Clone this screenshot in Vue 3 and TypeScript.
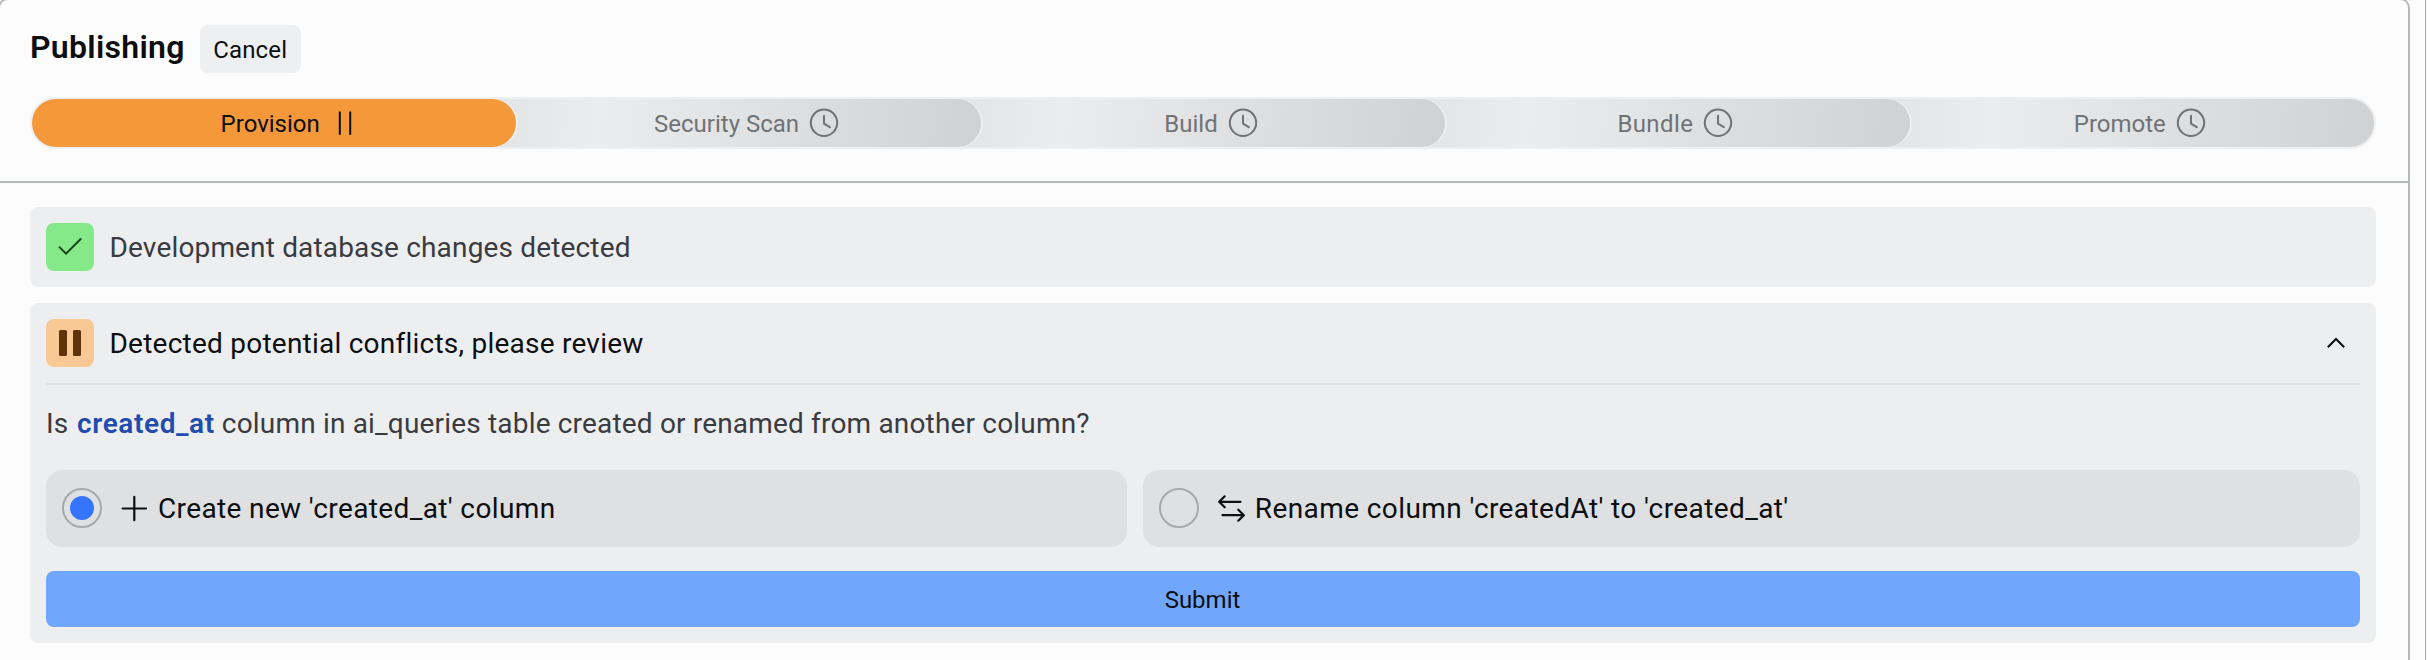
<script setup lang="ts">
import { ref } from 'vue'

interface Stage {
  id: string
  label: string
  state: 'paused' | 'pending'
}

const stages: Stage[] = [
  { id: 'provision', label: 'Provision', state: 'paused' },
  { id: 'scan', label: 'Security Scan', state: 'pending' },
  { id: 'build', label: 'Build', state: 'pending' },
  { id: 'bundle', label: 'Bundle', state: 'pending' },
  { id: 'promote', label: 'Promote', state: 'pending' },
]

const choice = ref<'create' | 'rename'>('create')
const expanded = ref(true)
</script>

<template>
  <div class="page">
    <main class="panel">
      <header class="header">
        <div class="heading">
          <h1>Publishing</h1>
          <button class="cancel" type="button">Cancel</button>
        </div>
        <ol class="stages">
          <li v-for="stage in stages" :key="stage.id" class="stage" :class="[stage.state, stage.id]">
            <span>{{ stage.label }}</span>
            <svg v-if="stage.state === 'paused'" width="32" height="32" viewBox="0 0 32 32">
              <path d="M10.8 5.3v21.6M21.2 5.3v21.6" />
            </svg>
            <svg v-else width="32" height="32" viewBox="0 0 32 32">
              <circle cx="16" cy="15.8" r="13.2" />
              <path d="M16 8.8v7.8l5.8 3.6" />
            </svg>
          </li>
        </ol>
      </header>

      <section class="steps">
        <article class="card">
          <div class="row done">
            <svg class="badge ok" width="48" height="48" viewBox="0 0 48 48">
              <path d="M13 23.6l7 7L35.2 15.5" />
            </svg>
            <span class="done-text">Development database changes detected</span>
          </div>
        </article>

        <article class="card">
          <div class="row head" @click="expanded = !expanded">
            <svg class="badge wait" width="48" height="48" viewBox="0 0 48 48">
              <rect x="13" y="11" width="8" height="26" rx="1.5" />
              <rect x="27" y="11" width="8" height="26" rx="1.5" />
            </svg>
            <span class="head-text">Detected potential conflicts, please review</span>
            <svg class="chevron" width="48" height="48" viewBox="0 0 48 48">
              <path d="M15.8 28.2L24 20l8.2 8.2" />
            </svg>
          </div>
          <form v-if="expanded" class="body" @submit.prevent>
            <p class="question">
              Is <strong>created_at</strong> column in ai_queries table created or renamed from another column?
            </p>
            <div class="options">
              <label class="option create">
                <input v-model="choice" type="radio" name="resolution" value="create" />
                <svg width="28" height="28" viewBox="0 0 28 28">
                  <path d="M14.3 1.8v23.4M2.6 13.5h23.4" />
                </svg>
                <span>Create new 'created_at' column</span>
              </label>
              <label class="option rename">
                <input v-model="choice" type="radio" name="resolution" value="rename" />
                <svg width="28" height="28" viewBox="0 0 28 28">
                  <path d="M23.5 6.8H2.2M7.7 1.3L2.2 6.8l5.5 5.5M5.5 20.2h21.3M21.3 14.7l5.5 5.5-5.5 5.5" />
                </svg>
                <span>Rename column 'createdAt' to 'created_at'</span>
              </label>
            </div>
            <button class="submit" type="submit">Submit</button>
          </form>
        </article>
      </section>
    </main>
  </div>
</template>

<style>
body {
  background: #fcfcfc;
}
</style>

<style scoped>
.page {
  box-sizing: border-box;
  width: 2426px;
  height: 660px;
  overflow: hidden;
  border-right: 1px solid #a9acac;
  background: #fcfcfc;
  font-family: Roboto, "Liberation Sans", sans-serif;
  color: #0d0e10;
}

.panel {
  box-sizing: border-box;
  width: 2412px;
  height: 700px;
  margin: -2px 0 0 -2px;
  border: 2px solid #b6b9b9;
  border-radius: 10px;
}

.header {
  box-sizing: border-box;
  height: 183px;
  padding: 23px 32px 0 30px;
  border-bottom: 2px solid #b6b9b9;
}

.heading {
  display: flex;
  align-items: baseline;
  gap: 15px;
  height: 48px;
}

h1 {
  margin: 0;
  font-size: 32px;
  line-height: 48px;
  font-weight: 600;
  letter-spacing: 0.3px;
}

button {
  border: 0;
  font: inherit;
  color: inherit;
}

.cancel {
  box-sizing: border-box;
  width: 101px;
  height: 48px;
  padding: 2px 0 0;
  border-radius: 8px;
  background: #eeeff1;
  font-size: 24px;
  line-height: 46px;
  letter-spacing: 0.15px;
}

.stages {
  display: flex;
  box-sizing: border-box;
  width: 2346px;
  height: 52px;
  margin: 26px 0 0;
  padding: 0;
  border: 2px solid #edeff1;
  border-radius: 26px;
  background: #edeff1;
  list-style: none;
}

.stage {
  display: flex;
  flex: none;
  box-sizing: border-box;
  align-items: center;
  justify-content: center;
  gap: 9px;
  width: 484.4px;
  padding-left: 17px;
  border-radius: 0 24px 24px 0;
  box-shadow: 2px 0 0 #edeff1;
  background: linear-gradient(95deg, #e3e4e5 0%, #ebeced 21%, #d0d1d2 100%);
  color: #707376;
  font-size: 24px;
}

.stage + .stage {
  margin-left: -20px;
}

/* Earlier stages overlap the ones after them. */
.stage:nth-child(1) { z-index: 5; }
.stage:nth-child(2) { z-index: 4; }
.stage:nth-child(3) { z-index: 3; }
.stage:nth-child(4) { z-index: 2; }
.stage:nth-child(5) { z-index: 1; }

.stage:last-child {
  box-shadow: none;
}

.stage.paused {
  padding-left: 33px;
  border-radius: 24px;
  background: #f4983a;
  color: #0d0e10;
}

.bundle {
  letter-spacing: 0.4px;
}

.stage span {
  padding-top: 2px;
  line-height: 46px;
}

.stage svg {
  flex: none;
  fill: none;
  stroke: currentColor;
  stroke-width: 2;
  stroke-linecap: round;
  stroke-linejoin: round;
}

.steps {
  display: flex;
  flex-direction: column;
  gap: 16px;
  padding: 24px 32px 0 30px;
}

.card {
  padding: 16px;
  border-radius: 8px;
  background: #edeef0;
}

.row {
  display: flex;
  align-items: center;
  gap: 15.5px;
  font-size: 28px;
}

.row span {
  padding-top: 2px;
  line-height: 46px;
}

.done-text {
  color: #3a3b40;
  letter-spacing: 0.16px;
}

.head {
  padding-bottom: 16px;
  border-bottom: 2px solid #dfe1e3;
}

.head-text {
  letter-spacing: 0.236px;
}

.badge {
  flex: none;
  border-radius: 8px;
}

.ok {
  background: #86e989;
  fill: none;
  stroke: #15431a;
  stroke-width: 2;
}

.wait {
  background: #f8c994;
  fill: #5f340b;
}

.chevron {
  margin-left: auto;
  fill: none;
  stroke: #0d0e10;
  stroke-width: 2;
}

.body {
  display: flex;
  flex-direction: column;
}

.question {
  margin: 19px 0 26px;
  color: #3a3b40;
  font-size: 28px;
  line-height: 40px;
  letter-spacing: 0.175px;
}

.question strong {
  margin-left: 1.5px;
  color: #214cae;
  font-weight: 600;
  letter-spacing: 0.6px;
}

.options {
  display: flex;
  gap: 16px;
}

.option {
  display: flex;
  flex: 1 1 auto;
  box-sizing: border-box;
  align-items: center;
  height: 77px;
  padding: 0 16px;
  border-radius: 16px;
  background: #dfe0e2;
  font-size: 28px;
  line-height: 40px;
}

.option.create {
  letter-spacing: 0.37px;
}

.option.rename {
  letter-spacing: 0.4px;
}

.option input {
  display: grid;
  flex: none;
  box-sizing: border-box;
  width: 40px;
  height: 40px;
  margin: 0 18px 1px 0;
  place-content: center;
  border: 2px solid #a6a8aa;
  border-radius: 50%;
  appearance: none;
}

.option input:checked::before {
  width: 24px;
  height: 24px;
  border-radius: 50%;
  background: #3574fd;
  content: "";
}

.option svg {
  flex: none;
  margin-right: 10px;
  fill: none;
  stroke: #0d0e10;
  stroke-width: 2.2;
  stroke-linecap: round;
  stroke-linejoin: round;
}

.submit {
  height: 56px;
  margin-top: 24px;
  padding: 1px 1px 0 0;
  border-radius: 8px;
  background: #70a6fb;
  font-size: 24px;
}
</style>
